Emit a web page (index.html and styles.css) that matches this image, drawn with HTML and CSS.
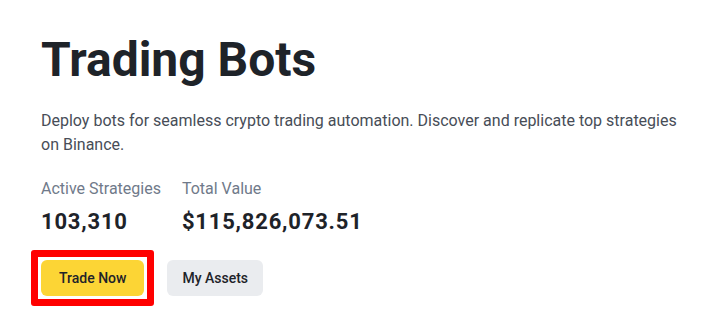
FILE: index.html
```html
<!DOCTYPE html>
<html>
<head>
<meta charset="utf-8">
<link rel="stylesheet" href="styles.css">
</head>
<body>
<main class="hero">
  <h1 class="title">Trading Bots</h1>
  <p class="desc">Deploy bots for seamless crypto trading automation. Discover and replicate top strategies on Binance.</p>
  <div class="stats">
    <div class="stat">
      <div class="stat-label">Active Strategies</div>
      <div class="stat-value">103,310</div>
    </div>
    <div class="stat">
      <div class="stat-label">Total Value</div>
      <div class="stat-value">$115,826,073.51</div>
    </div>
  </div>
  <div class="actions">
    <span class="highlight"><button class="btn btn-primary">Trade Now</button></span>
    <button class="btn btn-secondary">My Assets</button>
  </div>
</main>
</body>
</html>
```
FILE: styles.css
```css
html, body {
  margin: 0;
  padding: 0;
  background: #ffffff;
}
body {
  font-family: Roboto, "Noto Sans", sans-serif;
  color: #1E2329;
}
.hero {
  display: flex;
  flex-direction: column;
  align-items: flex-start;
  padding: 32px 0 22px 41px;
}
.title {
  margin: 0;
  font-size: 48px;
  line-height: 56px;
  font-weight: 700;
  color: #1E2329;
}
.desc {
  margin: 21px 0 0 0;
  width: 648px;
  font-size: 16px;
  line-height: 24px;
  color: #474D57;
}
.stats {
  display: flex;
  gap: 21px;
  margin-top: 20px;
}
.stat-label {
  font-size: 16px;
  line-height: 24px;
  color: #707A8A;
}
.stat-value {
  margin-top: 7px;
  font-size: 22px;
  line-height: 28px;
  font-weight: 700;
  letter-spacing: 0.8px;
  color: #1E2329;
}
.actions {
  display: flex;
  align-items: center;
  gap: 13px;
  margin: 14px 0 0 -10px;
}
.highlight {
  display: flex;
  padding: 3px;
  border: 7px solid #FF0000;
  border-radius: 3px;
}
.btn {
  height: 36px;
  padding: 0 15px;
  border: none;
  border-radius: 6px;
  font-family: Roboto, "Noto Sans", sans-serif;
  font-size: 14px;
  font-weight: 500;
  color: #1E2329;
  cursor: pointer;
}
.btn-primary {
  padding: 0 18px;
  background: #FCD535;
}
.btn-secondary {
  background: #EAECEF;
}
```
